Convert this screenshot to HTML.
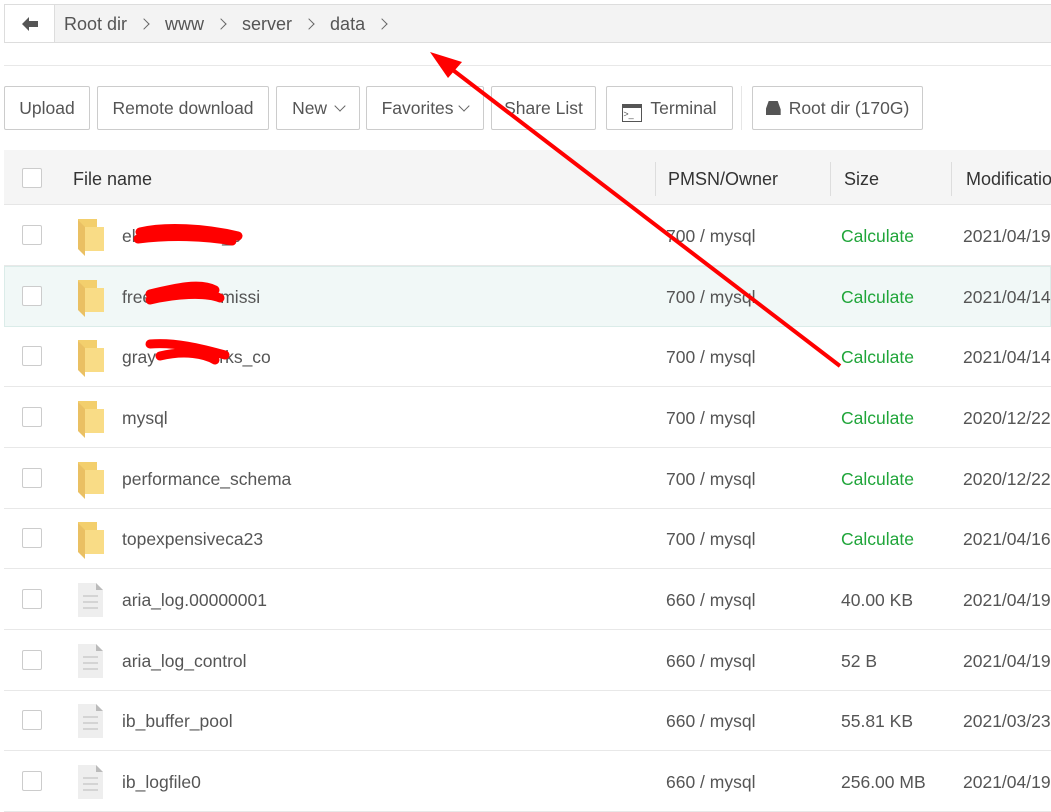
<!DOCTYPE html><html><head><style>
body{margin:0;width:1051px;height:793px;overflow:hidden;background:#fff;font-family:"Liberation Sans",sans-serif;color:#555;font-size:17.5px;position:relative}
.a{position:absolute}
.bc{left:4px;top:4px;width:1050px;height:39px;border:1px solid #ddd;background:#f3f3f3;box-sizing:border-box}
.back{left:4px;top:4px;width:51px;height:39px;background:#fff;border:1px solid #ddd;box-sizing:border-box}
.btn{top:86px;height:44px;border:1px solid #ccc;border-radius:2px;box-sizing:border-box;line-height:42px;text-align:center;background:#fff;color:#555}
.hd{left:4px;top:150px;width:1047px;height:54px;background:#f5f5f5;border-bottom:1px solid #e6e6e6}
.cb{width:20px;height:20px;border:1px solid #ccc;border-radius:2px;background:#fff;box-sizing:border-box}
.row{left:4px;width:1047px;border-bottom:1px solid #e8e8e8;box-sizing:border-box}
.dv{top:162px;width:1px;height:34px;background:#ddd}
.g{color:#20a53a}
.ch{display:inline-block;width:7px;height:7px;border-right:1.6px solid #666;border-top:1.6px solid #666;transform:rotate(45deg);vertical-align:2px}
.bc2 .ch{margin:0 17px 0 13px}
</style></head><body>
<div class="a bc"></div>
<div class="a back"><svg class="a" style="left:16px;top:11px" width="18" height="16" viewBox="0 0 18 16"><path d="M1 8L8 1V5H17V11H8V15Z" fill="#555"/></svg></div>
<div class="a bc2" style="left:64px;top:14px;font-size:18px;color:#555;white-space:nowrap">Root dir<span class="ch"></span>www<span class="ch"></span>server<span class="ch"></span>data<span class="ch"></span></div>
<div class="a" style="left:4px;top:65px;width:1047px;height:1px;background:#e8e8e8"></div>
<div class="a btn" style="left:4px;width:86px">Upload</div>
<div class="a btn" style="left:97px;width:172px">Remote download</div>
<div class="a btn" style="left:276px;width:84px">New <span class="ch" style="transform:rotate(135deg);vertical-align:4px;margin-left:4px"></span></div>
<div class="a btn" style="left:366px;width:118px">Favorites <span class="ch" style="transform:rotate(135deg);vertical-align:4px;margin-left:2px"></span></div>
<div class="a btn" style="left:491px;width:105px">Share List</div>
<div class="a btn" style="left:606px;width:127px"><span style="display:inline-block;width:18px;height:13px;border:1.5px solid #555;border-top-width:4px;vertical-align:-3px;margin-right:8px;font-size:9px;line-height:12px;text-align:left">&gt;_</span>Terminal</div>
<div class="a" style="left:741px;top:86px;width:1px;height:44px;background:#e6e6e6"></div>
<div class="a btn" style="left:752px;width:171px"><span style="display:inline-block;width:15px;height:14px;background:#555;vertical-align:-1px;margin-right:8px;clip-path:polygon(20% 0,80% 0,100% 60%,100% 100%,0 100%,0 60%)"></span>Root dir (170G)</div>
<div class="a hd"></div>
<div class="a cb" style="left:22px;top:168px"></div>
<div class="a" style="left:73px;top:169px;font-size:18px;color:#333">File name</div>
<div class="a dv" style="left:655px"></div><div class="a" style="left:668px;top:169px;font-size:18px;color:#333">PMSN/Owner</div>
<div class="a dv" style="left:830px"></div><div class="a" style="left:844px;top:169px;font-size:18px;color:#333">Size</div>
<div class="a dv" style="left:951px"></div><div class="a" style="left:966px;top:169px;font-size:18px;color:#333;white-space:nowrap">Modification</div>
<div id="rows"></div>
<script>
var d=[["elec              _c","700 / mysql","Calculate","2021/04/19",1],["free              missi","700 / mysql","Calculate","2021/04/14",1],["gray             rks_co","700 / mysql","Calculate","2021/04/14",1],["mysql","700 / mysql","Calculate","2020/12/22",1],["performance_schema","700 / mysql","Calculate","2020/12/22",1],["topexpensiveca23","700 / mysql","Calculate","2021/04/16",1],["aria_log.00000001","660 / mysql","40.00 KB","2021/04/19",0],["aria_log_control","660 / mysql","52 B","2021/04/19",0],["ib_buffer_pool","660 / mysql","55.81 KB","2021/03/23",0],["ib_logfile0","660 / mysql","256.00 MB","2021/04/19",0]];
var h="";d.forEach(function(r,i){var t=205+i*60.67,c=t+30;
h+='<div class="a row" style="top:'+t+'px;height:61px;'+(i==1?'background:#f1f8f7;border:1px solid #dbece9':'')+'"></div>';
h+='<div class="a cb" style="left:22px;top:'+(c-10)+'px"></div>';
h+=r[4]?'<svg class="a" style="left:77px;top:'+(c-16)+'px" width="28" height="38" viewBox="0 0 28 38"><path d="M1 0H20V30H1Z" fill="#f3cf6d"/><path d="M8 8H27V32H8Z" fill="#f9dc86"/><path d="M1 1L8 8V37L1 30Z" fill="#eac063"/></svg>':'<svg class="a" style="left:78px;top:'+(c-16)+'px" width="25" height="34" viewBox="0 0 25 34"><path d="M0 0H18L25 7V34H0Z" fill="#eee"/><path d="M18 0V7H25Z" fill="#bbb"/><path d="M5 13H20M5 19H20M5 25H20" stroke="#ccc" stroke-width="1.5"/></svg>';
h+='<div class="a" style="left:122px;top:'+(c-9)+'px;white-space:pre">'+r[0]+'</div>';
h+='<div class="a" style="left:666px;top:'+(c-9)+'px">'+r[1]+'</div>';
h+='<div class="a'+(r[4]?' g':'')+'" style="left:841px;top:'+(c-9)+'px">'+r[2]+'</div>';
h+='<div class="a" style="left:963px;top:'+(c-9)+'px">'+r[3]+'</div>';});
document.getElementById("rows").innerHTML=h;
</script>
<svg class="a" style="left:0;top:0" width="1051" height="793">
<path d="M140 232C165 226 205 228 238 236M138 239C170 235 205 236 232 241" stroke="#f00" stroke-width="9" fill="none" stroke-linecap="round"/>
<path d="M150 294C175 288 200 282 215 290M150 300C175 294 205 292 220 298" stroke="#f00" stroke-width="9" fill="none" stroke-linecap="round"/>
<path d="M150 344C175 342 200 348 225 355M160 356C185 350 205 354 215 360" stroke="#f00" stroke-width="9" fill="none" stroke-linecap="round"/>
<line x1="840" y1="366" x2="445" y2="64" stroke="#f00" stroke-width="4"/>
<path d="M430 52L462 62L448 78Z" fill="#f00"/>
</svg>
</body></html>
